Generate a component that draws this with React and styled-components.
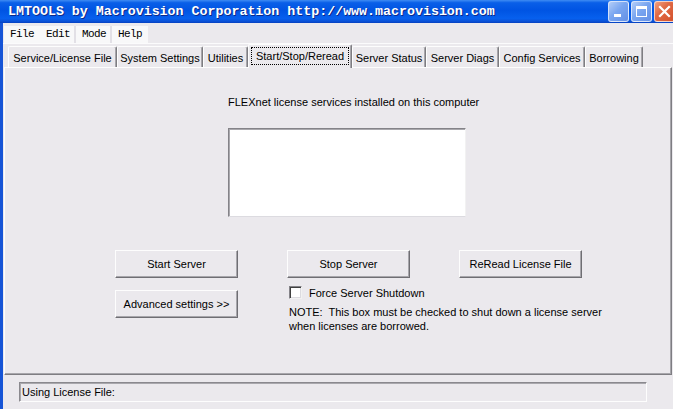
import React from 'react';
import styled, { createGlobalStyle } from 'styled-components';

const Global = createGlobalStyle`
  html, body { margin: 0; padding: 0; background: #ebe9ed; }
  body { font-family: "Liberation Sans", Arial, sans-serif; font-size: 11px; color: #000; }
  * { box-sizing: border-box; }
`;

const Window = styled.div`
  width: 673px;
  height: 409px;
  overflow: hidden;
  display: flex;
  flex-direction: column;
  background: #ebe9ed;
`;

const TitleBar = styled.div`
  flex: none;
  height: 23px;
  display: flex;
  align-items: center;
  padding-left: 8px;
  background: linear-gradient(#3f8cf3 0%, #0a5fe8 12%, #0054e3 45%, #0760ee 80%, #0a52d8 92%, #0540c0 100%);
`;

const TitleText = styled.div`
  flex: 1;
  font-family: "Liberation Mono", "DejaVu Sans Mono", monospace;
  font-weight: bold;
  font-size: 13.3px;
  color: #fff;
  white-space: nowrap;
  text-shadow: 1px 1px 0 #0c2a8a;
`;

const CaptionButtons = styled.div`
  display: flex;
  gap: 2px;
  margin-right: -2px;
  align-self: flex-start;
  margin-top: 1px;
`;

const CaptionButton = styled.div`
  width: 21px;
  height: 21px;
  border-radius: 3px;
  border: 1px solid rgba(255, 255, 255, 0.7);
  display: flex;
  align-items: center;
  justify-content: center;
  background: ${p => p.$close
    ? 'linear-gradient(135deg, #f0a080 0%, #e06a45 40%, #d4512c 100%)'
    : 'linear-gradient(135deg, #b3cdf7 0%, #7aa6f0 45%, #6490e6 100%)'};
`;

const Frame = styled.div`
  flex: 1;
  display: flex;
  flex-direction: column;
  border-left: 3px solid #1654d6;
  min-height: 0;
`;

const MenuBar = styled.div`
  flex: none;
  height: 21px;
  display: flex;
  align-items: flex-start;
  padding: 3px 0 0 1px;
  border-bottom: 1px solid #fbfbfc;
`;

const MenuItem = styled.div`
  height: 17px;
  padding: 0 6px;
  line-height: 17px;
  font-family: "Liberation Mono", "DejaVu Sans Mono", monospace;
  font-size: 11px;
  letter-spacing: -0.6px;
  background: #f8f8f9;
  box-shadow: ${p => (p.$gap ? '-2px 0 0 #e2e0e6' : 'none')};
`;

const TabStrip = styled.div`
  flex: none;
  height: 23px;
  display: flex;
  align-items: flex-end;
  padding-left: 5px;
  position: relative;
  z-index: 1;
`;

const Tab = styled.div`
  width: ${p => p.$w}px;
  height: ${p => (p.$active ? 24 : 21)}px;
  margin-bottom: ${p => (p.$active ? -1 : 0)}px;
  display: flex;
  align-items: center;
  justify-content: center;
  background: #ebe9ed;
  border-top: 1px solid #fdfdfd;
  border-left: 1px solid #fdfdfd;
  border-right: 1px solid #7e7d82;
  box-shadow: inset -1px 0 0 #a7a6ab;
  border-radius: 2px 2px 0 0;
  white-space: nowrap;
  padding: ${p => (p.$active ? '2px 2px 3px' : '2px 0 0')};
`;

const FocusRect = styled.span`
  flex: 1;
  align-self: stretch;
  display: flex;
  align-items: center;
  justify-content: center;
  outline: 1px dotted #000;
  outline-offset: -1px;
`;

const Panel = styled.div`
  flex: none;
  height: 308px;
  margin: 0 1px;
  border-top: 1px solid #fdfdfd;
  border-left: 1px solid #fdfdfd;
  border-right: 1px solid #7e7d82;
  border-bottom: 1px solid #7e7d82;
  box-shadow: inset -1px -1px 0 #a7a6ab;
  padding-top: 27px;
  display: flex;
  flex-direction: column;
`;

const Label = styled.div`
  margin-left: 223px;
  height: 14px;
  line-height: 14px;
`;

const ListBox = styled.div`
  margin: 19px 0 0 223px;
  width: 238px;
  height: 89px;
  background: #fff;
  border: 1px solid;
  border-color: #848388 #f2f2f2 #dcdbe0 #848388;
  box-shadow: inset 1px 1px 0 #a9a8ad;
`;

const ButtonGrid = styled.div`
  margin: 33px 0 0 110px;
  display: grid;
  grid-template-columns: 123px 123px 123px;
  column-gap: 49px;
  row-gap: 8px;
  align-items: start;
`;

const Button = styled.div`
  height: 28px;
  margin-top: ${p => p.$mt || 0}px;
  display: flex;
  align-items: center;
  justify-content: center;
  background: #ebe9ed;
  border: 1px solid;
  border-color: #fdfdfd #6f6e73 #6f6e73 #fdfdfd;
  box-shadow: inset -1px -1px 0 #a7a6ab;
`;

const OptionArea = styled.div`
  grid-column: 2 / span 2;
  padding-left: 2px;
  display: flex;
  flex-direction: column;
`;

const CheckRow = styled.label`
  display: flex;
  align-items: center;
  gap: 7px;
  height: 13px;
`;

const CheckBox = styled.span`
  width: 13px;
  height: 13px;
  background: #fff;
  border: 1px solid;
  border-color: #848388 #f2f2f2 #f2f2f2 #848388;
  box-shadow: inset 1px 1px 0 #404040, inset -1px -1px 0 #dcdbe0;
`;

const Note = styled.div`
  margin-top: 6px;
  line-height: 14px;
  white-space: pre;
`;

const StatusBox = styled.div`
  flex: none;
  margin: 7px 0 0 16px;
  width: 628px;
  height: 20px;
  border: 1px solid;
  border-color: #8a898e #fdfdfd #fdfdfd #8a898e;
  box-shadow: inset 1px 1px 0 #a9a8ad;
  padding-left: 2px;
  display: flex;
  align-items: center;
`;

const tabs = [
  { label: 'Service/License File', w: 109 },
  { label: 'System Settings', w: 86 },
  { label: 'Utilities', w: 45 },
  { label: 'Start/Stop/Reread', w: 104, active: true },
  { label: 'Server Status', w: 74 },
  { label: 'Server Diags', w: 73 },
  { label: 'Config Services', w: 86 },
  { label: 'Borrowing', w: 58 },
];

export default function App() {
  return (
    <>
      <Global />
      <Window>
        <TitleBar>
          <TitleText>LMTOOLS by Macrovision Corporation http://www.macrovision.com</TitleText>
          <CaptionButtons>
            <CaptionButton>
              <svg width="19" height="19" viewBox="0 0 19 19">
                <rect x="5" y="12" width="7" height="3" fill="#fff" />
              </svg>
            </CaptionButton>
            <CaptionButton>
              <svg width="19" height="19" viewBox="0 0 19 19">
                <rect x="4.5" y="4.5" width="10" height="10" fill="none" stroke="#fff" strokeWidth="1" />
                <rect x="4" y="4" width="11" height="3" fill="#fff" />
              </svg>
            </CaptionButton>
            <CaptionButton $close>
              <svg width="19" height="19" viewBox="0 0 19 19">
                <path d="M5 5 L14 14 M14 5 L5 14" stroke="#fff" strokeWidth="2.2" strokeLinecap="square" />
              </svg>
            </CaptionButton>
          </CaptionButtons>
        </TitleBar>
        <Frame>
          <MenuBar>
            <MenuItem>File</MenuItem>
            <MenuItem>Edit</MenuItem>
            <MenuItem $gap>Mode</MenuItem>
            <MenuItem $gap>Help</MenuItem>
          </MenuBar>
          <TabStrip>
            {tabs.map(t => (
              <Tab key={t.label} $w={t.w} $active={t.active}>
                {t.active ? <FocusRect>{t.label}</FocusRect> : t.label}
              </Tab>
            ))}
          </TabStrip>
          <Panel>
            <Label>FLEXnet license services installed on this computer</Label>
            <ListBox />
            <ButtonGrid>
              <Button>Start Server</Button>
              <Button>Stop Server</Button>
              <Button>ReRead License File</Button>
              <Button $mt={4}>Advanced settings &gt;&gt;</Button>
              <OptionArea>
                <CheckRow>
                  <CheckBox />
                  <span>Force Server Shutdown</span>
                </CheckRow>
                <Note>{'NOTE:  This box must be checked to shut down a license server\nwhen licenses are borrowed.'}</Note>
              </OptionArea>
            </ButtonGrid>
          </Panel>
          <StatusBox>Using License File:</StatusBox>
        </Frame>
      </Window>
    </>
  );
}
